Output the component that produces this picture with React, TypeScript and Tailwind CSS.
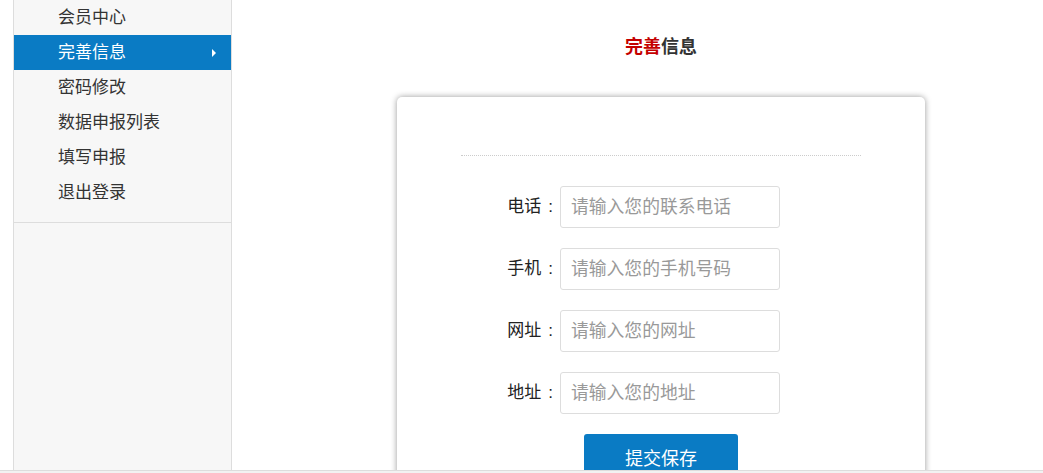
const menu = ["会员中心", "完善信息", "密码修改", "数据申报列表", "填写申报", "退出登录"];

const fields = [
  { label: "电话", placeholder: "请输入您的联系电话" },
  { label: "手机", placeholder: "请输入您的手机号码" },
  { label: "网址", placeholder: "请输入您的网址" },
  { label: "地址", placeholder: "请输入您的地址" },
];

function Sidebar() {
  return (
    <aside className="ml-[13px] w-[219px] shrink-0 border-x border-[#dddddd] bg-[#f7f7f7]">
      <ul className="border-b border-[#dddddd] pb-3">
        {menu.map((item, i) => {
          const active = i === 1;
          return (
            <li
              key={item}
              className={`flex h-[35px] items-center justify-between pl-[44px] pr-[15px] text-[17px] ${
                active ? "bg-[#0a7bc4] text-white" : "text-[#333333]"
              }`}
            >
              <span>{item}</span>
              {active && (
                <span className="h-0 w-0 border-y-[4px] border-l-[4px] border-y-transparent border-l-white" />
              )}
            </li>
          );
        })}
      </ul>
    </aside>
  );
}

export default function App() {
  return (
    <div
      className="flex h-[473px] flex-col overflow-hidden bg-white"
      style={{ fontFamily: '"Liberation Sans", "Noto Sans CJK SC", sans-serif' }}
    >
      <div className="flex min-h-0 flex-1">
        <Sidebar />
        <main className="flex-1 pl-[165px]">
          <div className="w-[528px]">
            <h2 className="pt-[35px] text-center text-[18px] font-bold leading-[24px] text-[#333333]">
              <span className="text-[#c40000]">完善</span>信息
            </h2>
            <div className="mt-[38px] h-[420px] rounded-[5px] bg-white px-[64px] pt-[58px] shadow-[0_0_6px_rgba(0,0,0,0.4)]">
              <div className="border-t border-dotted border-[#cccccc]" />
              <form className="mt-[30px] flex flex-col gap-[20px]">
                {fields.map((f) => (
                  <div key={f.label} className="flex items-center">
                    <label className="flex w-[99px] justify-end pr-[7px] text-[17px] text-[#222222]">
                      <span>{f.label}</span>
                      <span className="ml-[7px]">:</span>
                    </label>
                    <input
                      placeholder={f.placeholder}
                      className="h-[42px] w-[220px] rounded-[3px] border border-[#dddddd] px-[10px] text-[17.8px] text-[#333333] outline-none placeholder:text-[#999999]"
                    />
                  </div>
                ))}
                <div className="pl-[123px]">
                  <button
                    type="button"
                    className="h-[44px] w-[154px] rounded-t-[3px] bg-[#0a7bc4] pt-[6px] text-[18px] text-white"
                  >
                    提交保存
                  </button>
                </div>
              </form>
            </div>
          </div>
        </main>
      </div>
      <div className="h-[3px] shrink-0 border-t border-[#dddddd] bg-[#f2f2f2]" />
    </div>
  );
}
